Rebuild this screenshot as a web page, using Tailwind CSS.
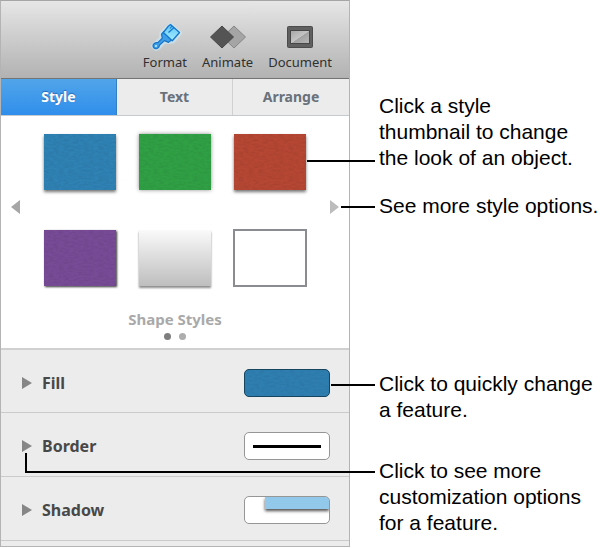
<!DOCTYPE html>
<html lang="en">
<head>
<meta charset="utf-8">
<meta name="viewport" content="width=device-width, initial-scale=1">
<title>Format inspector</title>
<script src="https://cdn.jsdelivr.net/npm/@tailwindcss/browser@4"></script>
</head>
<body class="bg-white font-['Noto_Sans','Open_Sans',sans-serif]">
<svg class="absolute size-0" aria-hidden="true">
  <defs>
    <filter id="paper" x="0" y="0" width="100%" height="100%">
      <feTurbulence type="fractalNoise" baseFrequency="0.2 0.5" numOctaves="3" seed="4"/>
      <feColorMatrix values="0 0 0 0 0  0 0 0 0 0  0 0 0 0 0  0.7 0 0 0 -0.25"/>
    </filter>
  </defs>
</svg>
<main class="grid grid-cols-[minmax(0,350fr)_minmax(0,254fr)] items-start">
  <section class="border border-t-[#a5a5a5] border-[#b4b4b4] bg-[#ececec]" aria-label="Inspector">
    <header class="flex justify-end gap-[15px] border-b border-[#737373] bg-linear-to-b from-[#e6e6e6] to-[#b2b2b2] pt-[19px] pr-[17px] pb-1.5 text-[13px] leading-5 text-[#303030] text-shadow-[0_1px_0_rgb(255_255_255/0.4)]">
      <button class="flex flex-col items-center gap-1">
        <svg class="h-7 w-9 overflow-visible" viewBox="0 0 36 28" aria-hidden="true">
          <defs><linearGradient id="bristle" x1="0" y1="0" x2="0" y2="1"><stop stop-color="#62c5fb"/><stop offset="1" stop-color="#a5edff"/></linearGradient></defs>
          <g stroke-linejoin="round">
            <path d="M23.500 5 33 13 26 21.500 22 22 17 22 12.500 27 9 29 6 26 9 23 14 18.500 14.500 13Z" fill="#c9efff" stroke="#c9efff" stroke-width="4" opacity=".55"/>
            <path d="M17 11.500 14.500 14.200 15.300 18.200 10.800 22.600C8 22.200 5.800 24 6 26.300 6.300 28.800 9.500 29.600 11.300 27.600 12.300 26.500 12.300 25.500 12.800 24.800L17.500 20.600 21.500 22.400 24.500 20Z" fill="#3d9fe8" stroke="#1873c6" stroke-width="1.200"/>
            <path d="M23.500 4.500 32.500 12.500 25.300 20.800 16.300 12.500 21.500 6Z" fill="url(#bristle)" stroke="#1576c9" stroke-width="1.300"/>
            <path d="M27 7.500 21.500 12.500M25 6 23 8.500" fill="none" stroke="#147ac9" stroke-width="1.200"/>
            <circle cx="9" cy="26" r="1.100" fill="#bceaff"/>
          </g>
        </svg>
        <span>Format</span>
      </button>
      <button class="flex flex-col items-center gap-1">
        <svg class="h-7 w-9 overflow-visible" viewBox="0 0 36 28" aria-hidden="true">
          <path d="M24 6 35.500 17 24 28 12.500 17Z" fill="#a5a5a5" stroke="#868686" stroke-linejoin="round"/>
          <path d="M12 6 23.500 17 12 28 0.500 17Z" fill="#545454" stroke="#484848" stroke-linejoin="round"/>
        </svg>
        <span>Animate</span>
      </button>
      <button class="flex flex-col items-center gap-1">
        <svg class="h-7 w-9" viewBox="0 0 36 28" aria-hidden="true">
          <defs><linearGradient id="screen" x1="0" y1="0" x2="1" y2="1"><stop stop-color="#a5a5a5"/><stop offset=".5" stop-color="#c4c4c4"/><stop offset=".52" stop-color="#a2a2a2"/><stop offset="1" stop-color="#b8b8b8"/></linearGradient></defs>
          <rect x="5.500" y="6.500" width="25" height="21" rx="1" fill="#606060" stroke="#4c4c4c"/>
          <rect x="8.500" y="10.500" width="19" height="13" fill="url(#screen)" stroke="#474747"/>
        </svg>
        <span>Document</span>
      </button>
    </header>

    <nav class="grid grid-cols-3 border-b border-[#c4cad0] text-sm font-bold text-[#69717b]" aria-label="Inspector tabs">
      <button class="h-9 border-r border-[#347fc4] bg-linear-to-b from-[#51a5e9] to-[#2f8eeb] text-white text-shadow-[0_-1px_1px_rgb(0_60_130/0.5)]">Style</button>
      <button class="h-9 border-r border-[#d0d0d0]">Text</button>
      <button class="h-9">Arrange</button>
    </nav>

    <div class="relative bg-white pt-[18px] pb-2">
      <div class="flex items-center justify-between px-2.5">
        <button class="pb-1.5" aria-label="Previous styles"><svg class="h-3.5 w-[9px]" viewBox="0 0 9 14"><path d="M9 0v14L0 7z" fill="#a6a6a6"/></svg></button>
        <div class="grid w-[262px] grid-cols-3 gap-x-[23px] gap-y-10 [&>button]:h-14">
          <button aria-label="Blue style" class="bg-[#2f82b4] shadow-[0_2px_3px_rgb(0_0_0/0.55)]"><svg class="size-full opacity-20"><rect width="100%" height="100%" filter="url(#paper)"/></svg></button>
          <button aria-label="Green style" class="bg-[#30a045] shadow-[0_0_4px_rgb(0_0_0/0.45)]"><svg class="size-full opacity-20"><rect width="100%" height="100%" filter="url(#paper)"/></svg></button>
          <button aria-label="Red style" class="bg-[#b54734] shadow-[0_2px_3px_rgb(0_0_0/0.55)]"><svg class="size-full opacity-20"><rect width="100%" height="100%" filter="url(#paper)"/></svg></button>
          <button aria-label="Purple style" class="bg-[#784b96] shadow-[1px_1px_2px_rgb(0_0_0/0.8)]"><svg class="size-full opacity-20"><rect width="100%" height="100%" filter="url(#paper)"/></svg></button>
          <button aria-label="Gradient style" class="bg-linear-to-b from-[#fafafa] to-[#bebebe] shadow-[0_2px_2px_rgb(0_0_0/0.45)]"></button>
          <button aria-label="Outline style" class="border border-[#8b8c91] outline outline-[#8b8c91]"></button>
        </div>
        <button class="pb-1.5" aria-label="More styles"><svg class="h-3.5 w-[9px]" viewBox="0 0 9 14"><path d="M0 0v14L9 7z" fill="#bcbcbc"/></svg></button>
      </div>
      <h2 class="mt-[23px] text-center text-[15px] leading-5 font-bold text-[#a9a9a9]">Shape Styles</h2>
      <div class="mt-1 flex justify-center gap-2">
        <span class="size-[7px] rounded-full bg-[#7e7e7e]"></span>
        <span class="size-[7px] rounded-full bg-[#adadad]"></span>
      </div>
      <span class="absolute top-11 -right-[26px] h-0.5 w-[68px] bg-black"></span>
      <span class="absolute top-[90px] -right-[26px] h-0.5 w-[34px] bg-black"></span>
    </div>

    <div class="relative flex h-16 items-center border-t-2 border-[#d0d0d0] pt-[3px] pr-[19px] pl-[21px]">
      <button class="flex items-center gap-2.5 text-base font-bold text-[#484848]"><svg class="h-3 w-2.5" viewBox="0 0 10 12" aria-hidden="true"><path d="M0 0v12l10-6z" fill="#868686"/></svg>Fill</button>
      <button aria-label="Fill color" class="ml-auto h-7 w-[86px] overflow-hidden rounded-[5px] border border-[#17445f] bg-[#2e7eb0]"><svg class="size-full opacity-15"><rect width="100%" height="100%" filter="url(#paper)"/></svg></button>
      <span class="absolute top-[34px] -right-[26px] h-0.5 w-11 bg-black"></span>
    </div>
    <div class="relative flex h-16 items-center border-t border-[#cbcbcb] pt-[3px] pr-[19px] pl-[21px]">
      <button class="flex items-center gap-2.5 text-base font-bold text-[#484848]"><svg class="h-3 w-2.5" viewBox="0 0 10 12" aria-hidden="true"><path d="M0 0v12l10-6z" fill="#868686"/></svg>Border</button>
      <button aria-label="Border style" class="ml-auto flex h-7 w-[86px] items-center rounded-[5px] border border-[#969696] bg-white px-2"><span class="h-[3px] w-full bg-black"></span></button>
      <span class="absolute top-10 -right-[26px] left-6 h-5 border-b-2 border-l-2 border-black"></span>
    </div>
    <div class="flex h-16 items-center border-t border-[#cbcbcb] pt-[3px] pr-[19px] pl-[21px]">
      <button class="flex items-center gap-2.5 text-base font-bold text-[#484848]"><svg class="h-3 w-2.5" viewBox="0 0 10 12" aria-hidden="true"><path d="M0 0v12l10-6z" fill="#868686"/></svg>Shadow</button>
      <button aria-label="Shadow style" class="ml-auto flex h-7 w-[86px] items-start justify-end overflow-hidden rounded-[5px] border border-[#969696] bg-white"><span class="h-3 w-16 bg-[#92c8e9] shadow-[0_2px_3px_rgb(0_0_0/0.7)]"></span></button>
    </div>
    <div class="h-1.5 border-t border-[#cbcbcb]"></div>
  </section>

  <aside class="pt-[93px] pl-[29px] font-['Liberation_Sans',Arial,sans-serif] text-[21px] leading-[26px] whitespace-nowrap text-black">
    <p>Click a style<br>thumbnail to change<br>the look of an object.</p>
    <p class="mt-[22px]">See more style options.</p>
    <p class="mt-[152px]">Click to quickly change<br>a feature.</p>
    <p class="mt-[35px]">Click to see more<br>customization options<br>for a feature.</p>
  </aside>
</main>
</body>
</html>
